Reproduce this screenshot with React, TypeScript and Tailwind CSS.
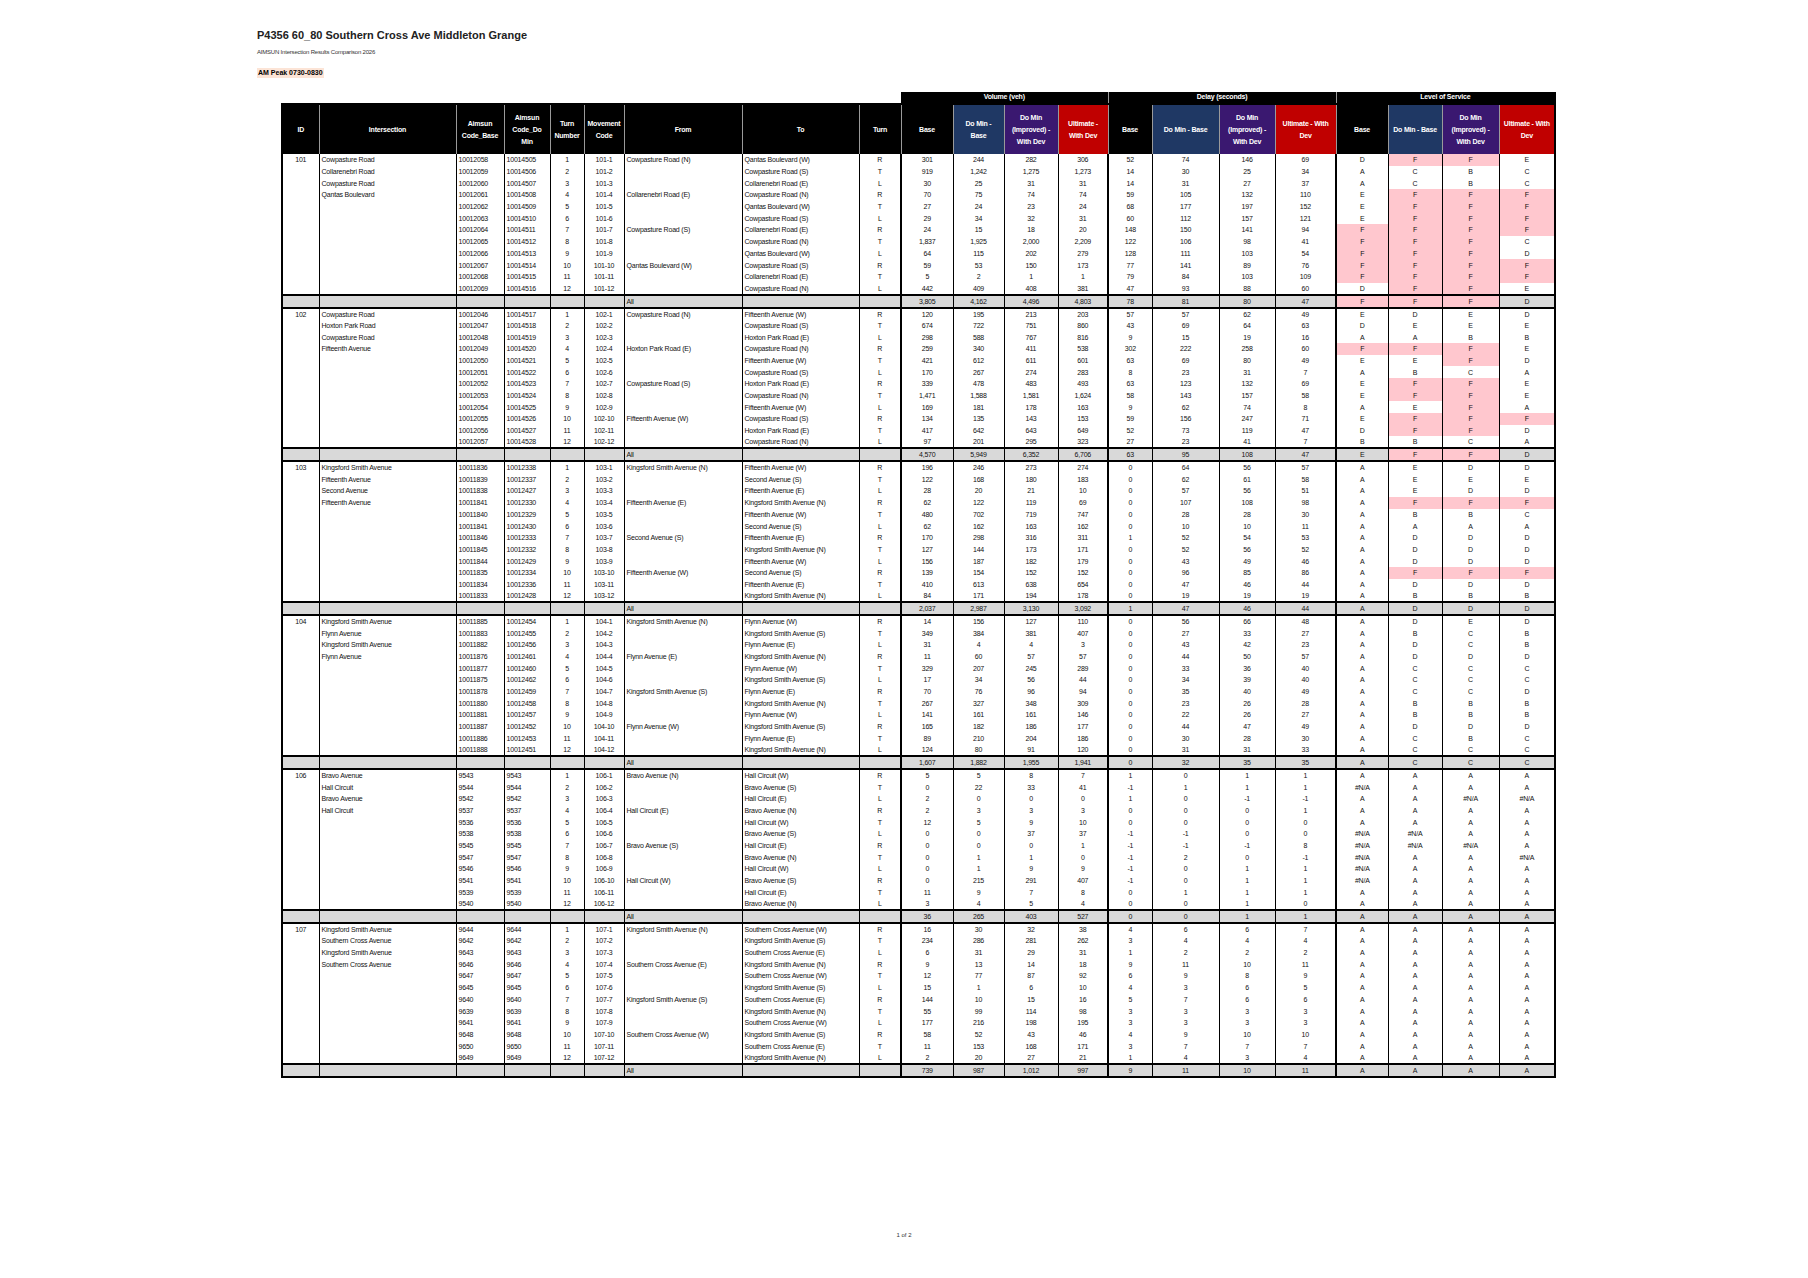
import React from "react";

type Block = { id: string; names: string[]; base: string[]; dom: string[]; from: string[]; to: string[]; vals: string[]; total: string };

const seq = (start: number, n: number) => Array.from({ length: n }, (_, i) => String(start + i));
const rep = (a: string[]) => [...a, ...a, ...a];

const blocks: Block[] = [
  {
    id: "101",
    names: ["Cowpasture Road", "Collarenebri Road", "Cowpasture Road", "Qantas Boulevard"],
    base: seq(10012058, 12),
    dom: seq(10014505, 12),
    from: ["Cowpasture Road (N)", "Collarenebri Road (E)", "Cowpasture Road (S)", "Qantas Boulevard (W)"],
    to: rep(["Qantas Boulevard (W)", "Cowpasture Road (S)", "Collarenebri Road (E)", "Cowpasture Road (N)"]),
    vals: [
      "301 244 282 306 52 74 146 69 D F F E",
      "919 1,242 1,275 1,273 14 30 25 34 A C B C",
      "30 25 31 31 14 31 27 37 A C B C",
      "70 75 74 74 59 105 132 110 E F F F",
      "27 24 23 24 68 177 197 152 E F F F",
      "29 34 32 31 60 112 157 121 E F F F",
      "24 15 18 20 148 150 141 94 F F F F",
      "1,837 1,925 2,000 2,209 122 106 98 41 F F F C",
      "64 115 202 279 128 111 103 54 F F F D",
      "59 53 150 173 77 141 89 76 F F F F",
      "5 2 1 1 79 84 103 109 F F F F",
      "442 409 408 381 47 93 88 60 D F F E",
    ],
    total: "3,805 4,162 4,496 4,803 78 81 80 47 F F F D",
  },
  {
    id: "102",
    names: ["Cowpasture Road", "Hoxton Park Road", "Cowpasture Road", "Fifteenth Avenue"],
    base: seq(10012046, 12),
    dom: seq(10014517, 12),
    from: ["Cowpasture Road (N)", "Hoxton Park Road (E)", "Cowpasture Road (S)", "Fifteenth Avenue (W)"],
    to: rep(["Fifteenth Avenue (W)", "Cowpasture Road (S)", "Hoxton Park Road (E)", "Cowpasture Road (N)"]),
    vals: [
      "120 195 213 203 57 57 62 49 E D E D",
      "674 722 751 860 43 69 64 63 D E E E",
      "298 588 767 816 9 15 19 16 A A B B",
      "259 340 411 538 302 222 258 60 F F F E",
      "421 612 611 601 63 69 80 49 E E F D",
      "170 267 274 283 8 23 31 7 A B C A",
      "339 478 483 493 63 123 132 69 E F F E",
      "1,471 1,588 1,581 1,624 58 143 157 58 E F F E",
      "169 181 178 163 9 62 74 8 A E F A",
      "134 135 143 153 59 156 247 71 E F F F",
      "417 642 643 649 52 73 119 47 D F F D",
      "97 201 295 323 27 23 41 7 B B C A",
    ],
    total: "4,570 5,949 6,352 6,706 63 95 108 47 E F F D",
  },
  {
    id: "103",
    names: ["Kingsford Smith Avenue", "Fifteenth Avenue", "Second Avenue", "Fifteenth Avenue"],
    base: ["10011836", "10011839", "10011838", "10011841", "10011840", "10011841", "10011846", "10011845", "10011844", "10011835", "10011834", "10011833"],
    dom: ["10012338", "10012337", "10012427", "10012330", "10012329", "10012430", "10012333", "10012332", "10012429", "10012334", "10012336", "10012428"],
    from: ["Kingsford Smith Avenue (N)", "Fifteenth Avenue (E)", "Second Avenue (S)", "Fifteenth Avenue (W)"],
    to: rep(["Fifteenth Avenue (W)", "Second Avenue (S)", "Fifteenth Avenue (E)", "Kingsford Smith Avenue (N)"]),
    vals: [
      "196 246 273 274 0 64 56 57 A E D D",
      "122 168 180 183 0 62 61 58 A E E E",
      "28 20 21 10 0 57 56 51 A E D D",
      "62 122 119 69 0 107 108 98 A F F F",
      "480 702 719 747 0 28 28 30 A B B C",
      "62 162 163 162 0 10 10 11 A A A A",
      "170 298 316 311 1 52 54 53 A D D D",
      "127 144 173 171 0 52 56 52 A D D D",
      "156 187 182 179 0 43 49 46 A D D D",
      "139 154 152 152 0 96 85 86 A F F F",
      "410 613 638 654 0 47 46 44 A D D D",
      "84 171 194 178 0 19 19 19 A B B B",
    ],
    total: "2,037 2,987 3,130 3,092 1 47 46 44 A D D D",
  },
  {
    id: "104",
    names: ["Kingsford Smith Avenue", "Flynn Avenue", "Kingsford Smith Avenue", "Flynn Avenue"],
    base: ["10011885", "10011883", "10011882", "10011876", "10011877", "10011875", "10011878", "10011880", "10011881", "10011887", "10011886", "10011888"],
    dom: ["10012454", "10012455", "10012456", "10012461", "10012460", "10012462", "10012459", "10012458", "10012457", "10012452", "10012453", "10012451"],
    from: ["Kingsford Smith Avenue (N)", "Flynn Avenue (E)", "Kingsford Smith Avenue (S)", "Flynn Avenue (W)"],
    to: rep(["Flynn Avenue (W)", "Kingsford Smith Avenue (S)", "Flynn Avenue (E)", "Kingsford Smith Avenue (N)"]),
    vals: [
      "14 156 127 110 0 56 66 48 A D E D",
      "349 384 381 407 0 27 33 27 A B C B",
      "31 4 4 3 0 43 42 23 A D C B",
      "11 60 57 57 0 44 50 57 A D D D",
      "329 207 245 289 0 33 36 40 A C C C",
      "17 34 56 44 0 34 39 40 A C C C",
      "70 76 96 94 0 35 40 49 A C C D",
      "267 327 348 309 0 23 26 28 A B B B",
      "141 161 161 146 0 22 26 27 A B B B",
      "165 182 186 177 0 44 47 49 A D D D",
      "89 210 204 186 0 30 28 30 A C B C",
      "124 80 91 120 0 31 31 33 A C C C",
    ],
    total: "1,607 1,882 1,955 1,941 0 32 35 35 A C C C",
  },
  {
    id: "106",
    names: ["Bravo Avenue", "Hall Circuit", "Bravo Avenue", "Hall Circuit"],
    base: ["9543", "9544", "9542", "9537", "9536", "9538", "9545", "9547", "9546", "9541", "9539", "9540"],
    dom: ["9543", "9544", "9542", "9537", "9536", "9538", "9545", "9547", "9546", "9541", "9539", "9540"],
    from: ["Bravo Avenue (N)", "Hall Circuit (E)", "Bravo Avenue (S)", "Hall Circuit (W)"],
    to: rep(["Hall Circuit (W)", "Bravo Avenue (S)", "Hall Circuit (E)", "Bravo Avenue (N)"]),
    vals: [
      "5 5 8 7 1 0 1 1 A A A A",
      "0 22 33 41 -1 1 1 1 #N/A A A A",
      "2 0 0 0 1 0 -1 -1 A A #N/A #N/A",
      "2 3 3 3 0 0 0 1 A A A A",
      "12 5 9 10 0 0 0 0 A A A A",
      "0 0 37 37 -1 -1 0 0 #N/A #N/A A A",
      "0 0 0 1 -1 -1 -1 8 #N/A #N/A #N/A A",
      "0 1 1 0 -1 2 0 -1 #N/A A A #N/A",
      "0 1 9 9 -1 0 1 1 #N/A A A A",
      "0 215 291 407 -1 0 1 1 #N/A A A A",
      "11 9 7 8 0 1 1 1 A A A A",
      "3 4 5 4 0 0 1 0 A A A A",
    ],
    total: "36 265 403 527 0 0 1 1 A A A A",
  },
  {
    id: "107",
    names: ["Kingsford Smith Avenue", "Southern Cross Avenue", "Kingsford Smith Avenue", "Southern Cross Avenue"],
    base: ["9644", "9642", "9643", "9646", "9647", "9645", "9640", "9639", "9641", "9648", "9650", "9649"],
    dom: ["9644", "9642", "9643", "9646", "9647", "9645", "9640", "9639", "9641", "9648", "9650", "9649"],
    from: ["Kingsford Smith Avenue (N)", "Southern Cross Avenue (E)", "Kingsford Smith Avenue (S)", "Southern Cross Avenue (W)"],
    to: rep(["Southern Cross Avenue (W)", "Kingsford Smith Avenue (S)", "Southern Cross Avenue (E)", "Kingsford Smith Avenue (N)"]),
    vals: [
      "16 30 32 38 4 6 6 7 A A A A",
      "234 286 281 262 3 4 4 4 A A A A",
      "6 31 29 31 1 2 2 2 A A A A",
      "9 13 14 18 9 11 10 11 A A A A",
      "12 77 87 92 6 9 8 9 A A A A",
      "15 1 6 10 4 3 6 5 A A A A",
      "144 10 15 16 5 7 6 6 A A A A",
      "55 99 114 98 3 3 3 3 A A A A",
      "177 216 198 195 3 3 3 3 A A A A",
      "58 52 43 46 4 9 10 10 A A A A",
      "11 153 168 171 3 7 7 7 A A A A",
      "2 20 27 21 1 4 3 4 A A A A",
    ],
    total: "739 987 1,012 997 9 11 10 11 A A A A",
  },
];

const widths = [37, 137, 48, 46, 34, 40, 118, 117, 42, 52, 51, 54, 50, 44, 67, 56, 61, 52, 54, 57, 56];
const turns = ["R", "T", "L"];
const thick = new Set([8, 12, 16, 20]);

const cellBorder = (i: number) =>
  (thick.has(i) ? "border-r-2 " : "border-r ") + (i === 0 ? "border-l-2 " : "") + "border-black";

function Row({ cells, total }: { cells: string[]; total?: boolean }) {
  return (
    <tr className={total ? "bg-[#d9d9d9]" : ""}>
      {cells.map((c, i) => {
        const align = i === 1 || i === 2 || i === 3 || i === 6 || i === 7 ? "text-left pl-[2px]" : "text-center";
        const pink = i >= 17 && c === "F" ? "bg-[#ffc7ce]" : "";
        const yb = total ? "border-t-2 border-b-2 border-black h-[11.7px]" : "h-[11.7px]";
        return (
          <td key={i} className={`${cellBorder(i)} ${align} ${pink} ${yb} p-0 whitespace-nowrap overflow-hidden leading-[11px] align-middle`}>
            {c}
          </td>
        );
      })}
    </tr>
  );
}

const H = ({ children, bg, i }: { children: React.ReactNode; bg: string; i: number }) => (
  <th className={`${bg} text-white font-bold leading-[12px] p-0 border-r border-[#9a9a9a] ${i === 0 ? "border-l-2 border-l-black" : ""} ${i === 20 ? "border-r-2 border-r-black" : ""}`}>
    {children}
  </th>
);

export default function App() {
  const navy = "bg-[#1f3864]";
  const purple = "bg-[#3a1870]";
  const red = "bg-[#c00000]";
  const blk = "bg-black";
  return (
    <div className="w-[1808px] h-[1278px] bg-white text-black relative" style={{ fontFamily: '"Liberation Sans", Arial, sans-serif' }}>
      <div className="pl-[257px] pt-[28px]">
        <div className="text-[11px] font-bold h-[18px] leading-[14px] text-[#222]">P4356 60_80 Southern Cross Ave Middleton Grange</div>
        <div className="text-[6px] h-[12px] leading-[12px] tracking-[-0.2px] text-[#333]">AIMSUN Intersection Results Comparison 2026</div>
        <div className="mt-[2px] inline-block bg-[#fce4d6] text-[7px] font-bold leading-[10px] px-[1px]">AM Peak 0730-0830</div>
      </div>
      <div className="pl-[281px] pt-[10px]">
        <table className="table-fixed border-collapse text-[7px] tracking-[-0.2px]" style={{ width: 1273 }}>
          <colgroup>
            {widths.map((w, i) => (
              <col key={i} style={{ width: w }} />
            ))}
          </colgroup>
          <thead>
            <tr className="h-[12px]">
              <th colSpan={9} className="p-0"></th>
              <th colSpan={4} className="bg-black text-white font-bold text-[7px] p-0 border-r border-[#9a9a9a]">Volume (veh)</th>
              <th colSpan={4} className="bg-black text-white font-bold text-[7px] p-0 border-r border-[#9a9a9a]">Delay (seconds)</th>
              <th colSpan={4} className="bg-black text-white font-bold text-[7px] p-0 border-r-2 border-black">Level of Service</th>
            </tr>
            <tr className="h-[50px] border-t-2 border-black">
              <H bg={blk} i={0}>ID</H>
              <H bg={blk} i={1}>Intersection</H>
              <H bg={blk} i={2}>Aimsun<br />Code_Base</H>
              <H bg={blk} i={3}>Aimsun<br />Code_Do<br />Min</H>
              <H bg={blk} i={4}>Turn<br />Number</H>
              <H bg={blk} i={5}>Movement<br />Code</H>
              <H bg={blk} i={6}>From</H>
              <H bg={blk} i={7}>To</H>
              <H bg={blk} i={8}>Turn</H>
              <H bg={blk} i={9}>Base</H>
              <H bg={navy} i={10}>Do Min -<br />Base</H>
              <H bg={purple} i={11}>Do Min<br />(Improved) -<br />With Dev</H>
              <H bg={red} i={12}>Ultimate -<br />With Dev</H>
              <H bg={blk} i={13}>Base</H>
              <H bg={navy} i={14}>Do Min - Base</H>
              <H bg={purple} i={15}>Do Min<br />(Improved) -<br />With Dev</H>
              <H bg={red} i={16}>Ultimate - With<br />Dev</H>
              <H bg={blk} i={17}>Base</H>
              <H bg={navy} i={18}>Do Min - Base</H>
              <H bg={purple} i={19}>Do Min<br />(Improved) -<br />With Dev</H>
              <H bg={red} i={20}>Ultimate - With<br />Dev</H>
            </tr>
          </thead>
          <tbody className="text-[#111]">
            {blocks.map((b) => (
              <React.Fragment key={b.id}>
                {b.vals.map((v, r) => (
                  <Row
                    key={r}
                    cells={[
                      r === 0 ? b.id : "",
                      b.names[r] ?? "",
                      b.base[r],
                      b.dom[r],
                      String(r + 1),
                      `${b.id}-${r + 1}`,
                      r % 3 === 0 ? b.from[r / 3] : "",
                      b.to[r],
                      turns[r % 3],
                      ...v.split(" "),
                    ]}
                  />
                ))}
                <Row total cells={["", "", "", "", "", "", "All", "", "", ...b.total.split(" ")]} />
              </React.Fragment>
            ))}
          </tbody>
        </table>
      </div>
      <div className="absolute left-0 right-0 top-[1231px] text-center text-[6px] text-[#333]">1 of 2</div>
    </div>
  );
}
